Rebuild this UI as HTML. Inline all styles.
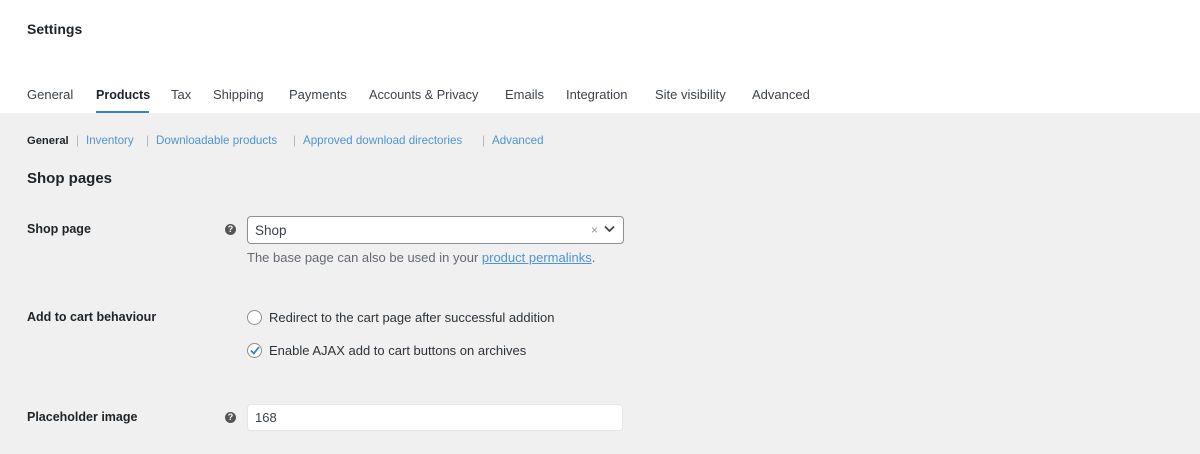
<!DOCTYPE html>
<html><head><style>
body{margin:0;width:1200px;height:454px;overflow:hidden;font-family:"Liberation Sans",sans-serif;color:#1d2327;background:#f0f0f1;position:relative}
.top{position:absolute;left:0;top:0;width:1200px;height:113px;background:#fff}
.a{position:absolute;white-space:nowrap}
.t{font-size:13px;top:87px;color:#3c434a}
.s{font-size:11.6px;top:134px;line-height:14px;color:#4f94d4}
.p{color:#b0b4b8}
.h{width:11px;height:11px;border-radius:50%;background:#555;color:#fff;font-size:9px;font-weight:bold;text-align:center;line-height:11px}
.box{background:#fff;border-radius:4px;box-sizing:border-box}
</style></head><body>
<div class="top"></div>
<div class="a" style="left:27px;top:21px;font-size:14px;font-weight:bold;color:#1d2327">Settings</div>
<div class="a t" style="left:27px">General</div>
<div class="a t" style="left:96px;font-weight:bold;color:#1d2327;font-size:12.5px;top:88px">Products</div>
<div class="a" style="left:96px;top:111px;width:53px;height:2px;background:#3582c4"></div>
<div class="a t" style="left:171px">Tax</div>
<div class="a t" style="left:213px">Shipping</div>
<div class="a t" style="left:289px">Payments</div>
<div class="a t" style="left:369px;font-size:12.7px;top:88px">Accounts &amp; Privacy</div>
<div class="a t" style="left:505px">Emails</div>
<div class="a t" style="left:566px">Integration</div>
<div class="a t" style="left:655px">Site visibility</div>
<div class="a t" style="left:752px">Advanced</div>
<div class="a s" style="left:27px;color:#1d2327;font-weight:bold;font-size:11.2px">General</div>
<div class="a s p" style="left:76px">|</div>
<div class="a s" style="left:86px">Inventory</div>
<div class="a s p" style="left:146px">|</div>
<div class="a s" style="left:156px">Downloadable products</div>
<div class="a s p" style="left:293px">|</div>
<div class="a s" style="left:303px">Approved download directories</div>
<div class="a s p" style="left:482px">|</div>
<div class="a s" style="left:492px">Advanced</div>
<div class="a" style="left:27px;top:170px;font-size:15px;font-weight:bold">Shop pages</div>
<div class="a" style="left:27px;top:222px;font-size:12.5px;font-weight:bold">Shop page</div>
<div class="a h" style="left:225px;top:224px">?</div>
<div class="a box" style="left:247px;top:216px;width:377px;height:28px;border:1px solid #8c8f94"></div>
<div class="a" style="left:255px;top:223px;font-size:13.5px;color:#3c434a">Shop</div>
<div class="a" style="left:591px;top:223px;font-size:12px;color:#999">×</div>
<svg class="a" style="left:604px;top:225px" width="11" height="8"><path d="M1 1.5L5.5 6L10 1.5" stroke="#3c434a" stroke-width="1.8" fill="none"/></svg>
<div class="a" style="left:247px;top:250px;font-size:13px;color:#646970">The base page can also be used in your <span style="color:#4f94d4;text-decoration:underline">product permalinks</span>.</div>
<div class="a" style="left:27px;top:310px;font-size:12.5px;font-weight:bold">Add to cart behaviour</div>
<div class="a" style="left:247px;top:310px;width:13px;height:13px;border:1px solid #8c8f94;border-radius:50%;background:#fff"></div>
<div class="a" style="left:269px;top:310px;font-size:13px;color:#2c3338">Redirect to the cart page after successful addition</div>
<div class="a" style="left:247px;top:343px;width:13px;height:13px;border:1px solid #8c8f94;border-radius:50%;background:#fff"></div>
<svg class="a" style="left:249px;top:345px" width="12" height="11"><path d="M2 5.5L4.8 8.5L10 2" stroke="#3582c4" stroke-width="1.8" fill="none"/></svg>
<div class="a" style="left:269px;top:343px;font-size:13px;color:#2c3338">Enable AJAX add to cart buttons on archives</div>
<div class="a" style="left:27px;top:410px;font-size:12.5px;font-weight:bold">Placeholder image</div>
<div class="a h" style="left:225px;top:412px">?</div>
<div class="a box" style="left:247px;top:404px;width:376px;height:27px;border:1px solid #e6e6e6"></div>
<div class="a" style="left:255px;top:410px;font-size:13px;color:#3c434a">168</div>
</body></html>
